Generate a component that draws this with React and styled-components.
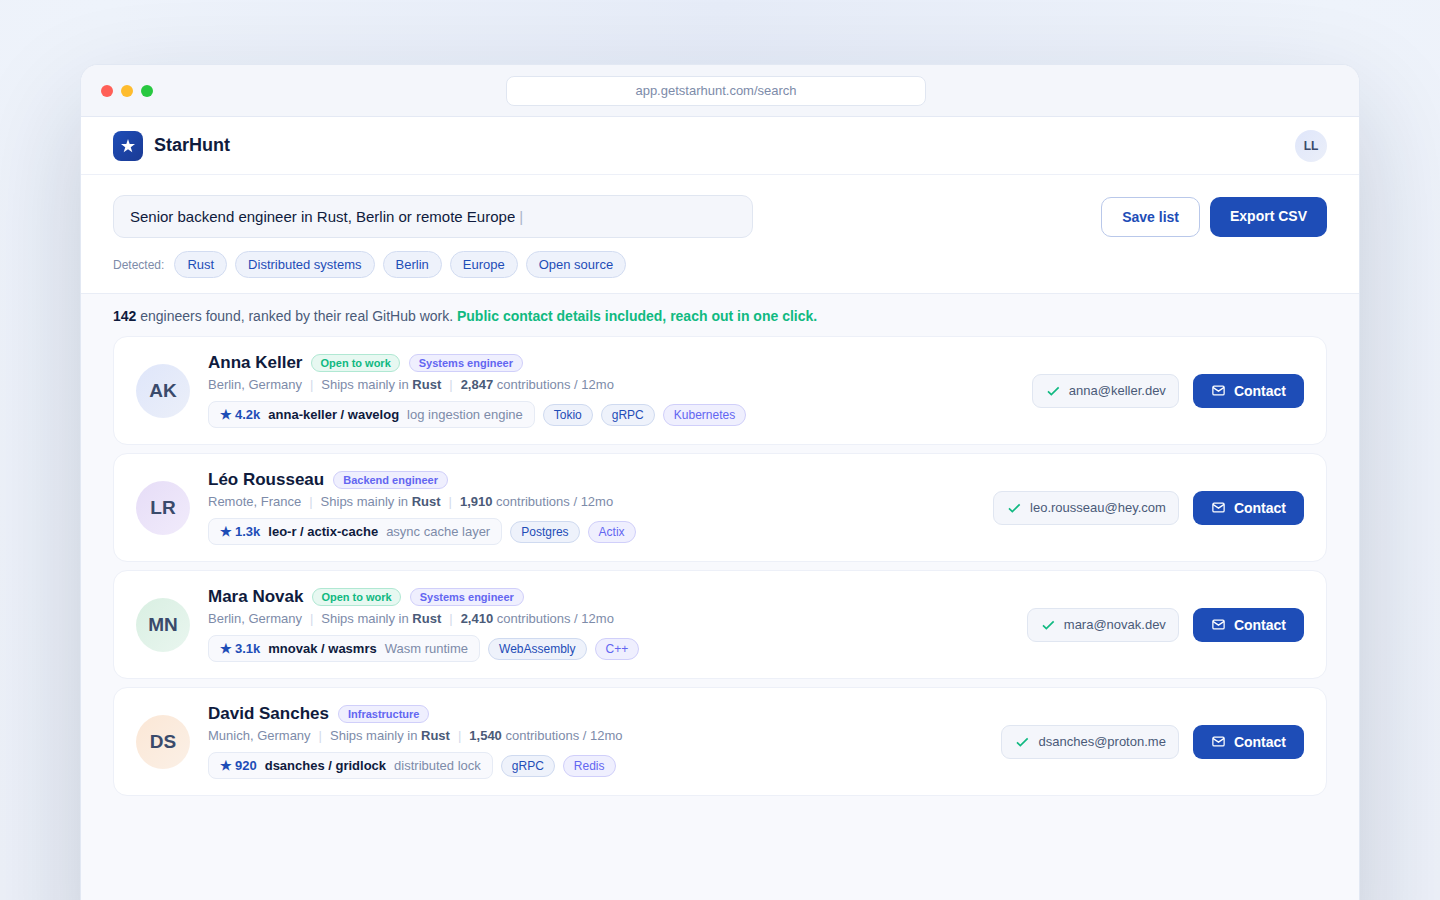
import React, { useState } from "react";
import styled, { createGlobalStyle } from "styled-components";

const GlobalStyle = createGlobalStyle`
  *, *::before, *::after { box-sizing: border-box; }
  body {
    margin: 0;
    font-family: "Liberation Sans", Arial, sans-serif;
    color: #0f1b3d;
  }
  button, input { font-family: inherit; }
  h1, h2, p, ul { margin: 0; padding: 0; }
`;

const Stage = styled.div`
  min-height: 100vh;
  padding: 64px 80px 0;
  overflow: hidden;
  background: radial-gradient(ellipse at 50% 0%, #e6ecf8 0%, #eef3fb 60%, #edf1f9 100%);
`;

const Window = styled.div`
  min-height: 100vh;
  margin-bottom: -64px;
  border: 1px solid #e2e8f3;
  border-radius: 18px;
  overflow: hidden;
  background: #f8f9fd;
  box-shadow: 0 44px 110px rgba(15, 32, 64, 0.19);
`;

const TitleBar = styled.div`
  display: flex;
  align-items: center;
  height: 52px;
  padding: 0 20px;
  background: #f4f6fb;
  border-bottom: 1px solid #e4e9f4;
`;

const Dots = styled.div`
  display: flex;
  gap: 8px;
`;

const Dot = styled.span`
  width: 12px;
  height: 12px;
  border-radius: 50%;
  background: ${(p) => p.$color};
`;

const Address = styled.div`
  flex: 0 1 420px;
  margin: 0 auto;
  padding: 6px 16px 7px;
  border: 1px solid #e0e6f1;
  border-radius: 8px;
  background: #fff;
  color: #7d8ba9;
  font-size: 13px;
  line-height: 15px;
  text-align: center;
`;

const TitleBarEnd = styled.div`
  width: 60px;
`;

const Header = styled.header`
  display: flex;
  align-items: center;
  justify-content: space-between;
  height: 58px;
  padding: 1px 32px 0;
  background: #fff;
  border-bottom: 1px solid #edf0f8;
`;

const Brand = styled.div`
  display: flex;
  align-items: center;
  gap: 11px;
`;

const Logo = styled.span`
  display: grid;
  place-items: center;
  width: 30px;
  height: 30px;
  border-radius: 8px;
  background: linear-gradient(135deg, #1e4db7, #1a3a94);
  color: #fff;
`;

const BrandName = styled.h1`
  font-size: 18px;
  line-height: 20px;
  padding-bottom: 2px;
`;

const Avatar = styled.div`
  display: grid;
  place-items: center;
  flex: none;
  width: ${(p) => p.$size}px;
  height: ${(p) => p.$size}px;
  border-radius: 50%;
  background: linear-gradient(135deg, ${(p) => p.$from}, ${(p) => p.$to});
  color: #3a4a6b;
  font-size: ${(p) => (p.$size > 40 ? 19 : 12)}px;
  font-weight: 700;
`;

const SearchPanel = styled.section`
  padding: 20px 32px 15px;
  background: #fff;
  border-bottom: 1px solid #e9edf6;
`;

const SearchRow = styled.form`
  display: flex;
  align-items: center;
  justify-content: space-between;
  gap: 24px;
`;

const SearchBox = styled.label`
  display: flex;
  align-items: center;
  flex: 0 1 640px;
  gap: 4px;
  padding: 12px 16px;
  border: 1px solid #e0e6f1;
  border-radius: 11px;
  background: #f4f6fb;
  font-size: 15px;
  line-height: 17px;
`;

const SearchInput = styled.input`
  field-sizing: content;
  min-width: 0;
  height: 17px;
  padding: 0;
  border: 0;
  outline: 0;
  background: transparent;
  color: inherit;
  font-size: 15px;
  line-height: 17px;
`;

const Caret = styled.span`
  color: #a9b4ca;
`;

const ButtonGroup = styled.div`
  display: flex;
  flex: none;
  gap: 10px;
`;

const ActionButton = styled.button`
  height: 40px;
  padding: ${(p) => (p.$primary ? "0 20px 2px" : "0 20px")};
  border: ${(p) => (p.$primary ? "0" : "1px solid #b9c8ea")};
  border-radius: 10px;
  background: ${(p) => (p.$primary ? "#1e4db7" : "#fff")};
  color: ${(p) => (p.$primary ? "#fff" : "#1e4db7")};
  font-size: 14px;
  font-weight: 700;
  line-height: 16px;
  cursor: pointer;
`;

const Detected = styled.div`
  display: flex;
  align-items: center;
  flex-wrap: wrap;
  gap: 8px;
  margin-top: 13px;
`;

const DetectedLabel = styled.span`
  margin-right: 2px;
  color: #7d8ba9;
  font-size: 12px;
`;

const Filter = styled.span`
  padding: 5px 12px;
  border: 1px solid #d2dcf1;
  border-radius: 14px;
  background: #eef2fb;
  color: #1e4db7;
  font-size: 13px;
  line-height: 15px;
`;

const Results = styled.main`
  padding: 14px 32px 32px;
`;

const Summary = styled.p`
  color: #4a5a78;
  font-size: 14px;
  line-height: 16px;

  b { color: #0f1b3d; }
  strong { color: #10b981; }
`;

const List = styled.ul`
  display: grid;
  gap: 8px;
  margin-top: 12px;
  list-style: none;
`;

const Card = styled.li`
  display: flex;
  align-items: center;
  gap: 18px;
  padding: 16px 22px;
  border: 1px solid #edf0f8;
  border-radius: 14px;
  background: #fff;
`;

const Info = styled.div`
  flex: 1;
  min-width: 0;
`;

const NameRow = styled.div`
  display: flex;
  align-items: center;
  gap: 9px;
`;

const Name = styled.h2`
  font-size: 17px;
  line-height: 20px;
`;

const badgeTones = {
  green: { border: "#b0e8d3", fill: "#e7f8f1", text: "#10b981" },
  violet: { border: "#d0cffa", fill: "#efeffe", text: "#6366f1" },
  blue: { border: "#cfdaf0", fill: "#eef2fb", text: "#1e4db7" },
};

const Badge = styled.span`
  padding: 2px ${(p) => (p.$tone === "green" ? 8 : 9)}px;
  border: 1px solid ${(p) => badgeTones[p.$tone].border};
  border-radius: 9px;
  background: ${(p) => badgeTones[p.$tone].fill};
  color: ${(p) => badgeTones[p.$tone].text};
  font-size: 11px;
  font-weight: 700;
  line-height: 12px;
`;

const Meta = styled.div`
  display: flex;
  gap: 8px;
  margin-top: 4px;
  color: #7d8ba9;
  font-size: 13px;
  line-height: 15px;

  b { color: #4a5a78; }
`;

const Divider = styled.span`
  color: #d3daea;
`;

const WorkRow = styled.div`
  display: flex;
  align-items: center;
  flex-wrap: wrap;
  gap: 8px;
  margin-top: 9px;
`;

const Repo = styled.div`
  display: flex;
  gap: 8px;
  padding: 5px 11px;
  border: 1px solid #e6ebf5;
  border-radius: 8px;
  background: #f8f9fd;
  color: #7d8ba9;
  font-size: 13px;
  line-height: 15px;
`;

const Stars = styled.b`
  display: flex;
  gap: 3px;
  color: #1e4db7;
`;

const RepoName = styled.b`
  color: #0f1b3d;
`;

const Tag = styled.span`
  padding: 3px 10px;
  border: 1px solid ${(p) => badgeTones[p.$tone].border};
  border-radius: 11px;
  background: ${(p) => badgeTones[p.$tone].fill};
  color: ${(p) => badgeTones[p.$tone].text};
  font-size: 12px;
  line-height: 14px;
`;

const Actions = styled.div`
  display: flex;
  align-items: center;
  gap: 14px;
`;

const Email = styled.div`
  display: flex;
  align-items: center;
  gap: 8px;
  height: 34px;
  padding: 0 12px;
  border: 1px solid #e0e6f1;
  border-radius: 9px;
  background: #f4f6fb;
  color: #4a5a78;
  font-size: 13px;
  line-height: 15px;
`;

const ContactButton = styled.button`
  display: flex;
  align-items: center;
  gap: 8px;
  height: 34px;
  padding: 0 18px;
  border: 0;
  border-radius: 9px;
  background: #1e4db7;
  color: #fff;
  font-size: 14px;
  font-weight: 700;
  line-height: 16px;
  cursor: pointer;
`;

const StarIcon = () => (
  <svg width="16" height="16" viewBox="0 0 24 24" fill="currentColor" aria-hidden="true">
    <path d="M12 1.500l2.500 7.500h8l-6.400 4.700 2.400 7.600-6.500-4.600-6.500 4.600 2.400-7.600L1.500 9h8z" />
  </svg>
);

const CheckIcon = () => (
  <svg width="16" height="16" viewBox="0 0 24 24" fill="none" stroke="#10b981" strokeWidth="2.5" aria-hidden="true">
    <path d="M20.500 6.500 9.500 17.500l-5-5" />
  </svg>
);

const MailIcon = () => (
  <svg width="15" height="15" viewBox="0 0 24 24" fill="none" stroke="currentColor" strokeWidth="2" aria-hidden="true">
    <rect x="3" y="5" width="18" height="14" rx="2" />
    <path d="m3 7 9 6 9-6" />
  </svg>
);

const filters = ["Rust", "Distributed systems", "Berlin", "Europe", "Open source"];

const people = [
  {
    name: "Anna Keller", initials: "AK", colors: ["#dfe6fa", "#ebeff9"], open: true, role: "Systems engineer",
    place: "Berlin, Germany", contributions: "2,847", stars: "4.2k", repo: "anna-keller / wavelog",
    about: "log ingestion engine", tags: ["Tokio", "gRPC", "Kubernetes"], email: "anna@keller.dev",
  },
  {
    name: "Léo Rousseau", initials: "LR", colors: ["#e6ddf7", "#f1ebfb"], open: false, role: "Backend engineer",
    place: "Remote, France", contributions: "1,910", stars: "1.3k", repo: "leo-r / actix-cache",
    about: "async cache layer", tags: ["Postgres", "Actix"], email: "leo.rousseau@hey.com",
  },
  {
    name: "Mara Novak", initials: "MN", colors: ["#d9efe2", "#e9f6ef"], open: true, role: "Systems engineer",
    place: "Berlin, Germany", contributions: "2,410", stars: "3.1k", repo: "mnovak / wasmrs",
    about: "Wasm runtime", tags: ["WebAssembly", "C++"], email: "mara@novak.dev",
  },
  {
    name: "David Sanches", initials: "DS", colors: ["#fbe7d6", "#fbf0e6"], open: false, role: "Infrastructure",
    place: "Munich, Germany", contributions: "1,540", stars: "920", repo: "dsanches / gridlock",
    about: "distributed lock", tags: ["gRPC", "Redis"], email: "dsanches@proton.me",
  },
];

function PersonCard({ person }) {
  return (
    <Card>
      <Avatar $size={54} $from={person.colors[0]} $to={person.colors[1]}>{person.initials}</Avatar>
      <Info>
        <NameRow>
          <Name>{person.name}</Name>
          {person.open && <Badge $tone="green">Open to work</Badge>}
          <Badge $tone="violet">{person.role}</Badge>
        </NameRow>
        <Meta>
          <span>{person.place}</span>
          <Divider>|</Divider>
          <span>Ships mainly in <b>Rust</b></span>
          <Divider>|</Divider>
          <span><b>{person.contributions}</b> contributions / 12mo</span>
        </Meta>
        <WorkRow>
          <Repo>
            <Stars><span>★</span><span>{person.stars}</span></Stars>
            <RepoName>{person.repo}</RepoName>
            <span>{person.about}</span>
          </Repo>
          {person.tags.map((tag, i) => (
            <Tag key={tag} $tone={i === person.tags.length - 1 ? "violet" : "blue"}>{tag}</Tag>
          ))}
        </WorkRow>
      </Info>
      <Actions>
        <Email><CheckIcon />{person.email}</Email>
        <ContactButton type="button"><MailIcon />Contact</ContactButton>
      </Actions>
    </Card>
  );
}

export default function App() {
  const [query, setQuery] = useState("Senior backend engineer in Rust, Berlin or remote Europe");

  return (
    <>
      <GlobalStyle />
      <Stage>
        <Window>
          <TitleBar>
            <Dots>
              <Dot $color="#ff5f57" />
              <Dot $color="#febc2e" />
              <Dot $color="#28c840" />
            </Dots>
            <Address>app.getstarhunt.com/search</Address>
            <TitleBarEnd />
          </TitleBar>
          <Header>
            <Brand>
              <Logo><StarIcon /></Logo>
              <BrandName>StarHunt</BrandName>
            </Brand>
            <Avatar $size={32} $from="#dfe6fa" $to="#ebeff9">LL</Avatar>
          </Header>
          <SearchPanel>
            <SearchRow onSubmit={(e) => e.preventDefault()}>
              <SearchBox>
                <SearchInput
                  type="text"
                  aria-label="Search engineers"
                  value={query}
                  onChange={(e) => setQuery(e.target.value)}
                />
                <Caret>|</Caret>
              </SearchBox>
              <ButtonGroup>
                <ActionButton type="button">Save list</ActionButton>
                <ActionButton type="button" $primary>Export CSV</ActionButton>
              </ButtonGroup>
            </SearchRow>
            <Detected>
              <DetectedLabel>Detected:</DetectedLabel>
              {filters.map((filter) => <Filter key={filter}>{filter}</Filter>)}
            </Detected>
          </SearchPanel>
          <Results>
            <Summary>
              <b>142</b> engineers found, ranked by their real GitHub work.{" "}
              <strong>Public contact details included, reach out in one click.</strong>
            </Summary>
            <List>
              {people.map((person) => <PersonCard key={person.name} person={person} />)}
            </List>
          </Results>
        </Window>
      </Stage>
    </>
  );
}
